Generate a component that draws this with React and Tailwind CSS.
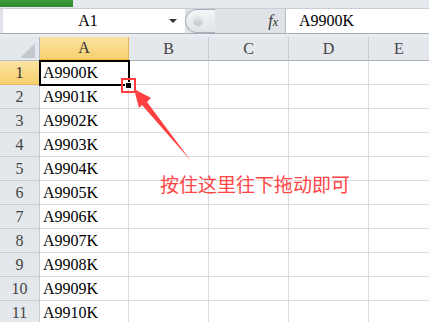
import React from "react";

const serif = { fontFamily: '"Liberation Serif", "Times New Roman", serif' };

const rows = Array.from({ length: 11 }, (_, i) => `A99${String(i).padStart(2, "0")}K`);

const HeaderCell = ({ w, label, active }) => (
  <div
    className={`${w} h-full shrink-0 flex items-center justify-center border-r text-[16px] ${
      active
        ? "bg-gradient-to-b from-[#fbe3a0] to-[#f7d06e] border-[#e3b45a] border-b-2 border-b-[#f0b54a] text-[#333]"
        : "bg-[#e4e7ec] border-[#c7ccd3] border-b border-b-[#a9b1bb] text-[#444]"
    }`}
  >
    {label}
  </div>
);

const App = () => {
  return (
    <div className="w-[429px] h-[322px] overflow-hidden bg-white" style={serif}>
      {/* top strip */}
      <div className="h-[8px] bg-[#e6e9ed] flex">
        <div className="w-[73px] h-[7px] bg-gradient-to-b from-[#3f9a3c] to-[#2f8a2e]" />
      </div>

      {/* formula bar */}
      <div className="h-[25px] flex bg-[#dfe3e8] border-t border-[#c9ced6]">
        <div className="w-[3px] bg-[#dfe3e8]" />
        <div className="w-[182px] bg-white flex items-center">
          <span className="flex-1 text-center text-[16px] text-black pl-[4px]">A1</span>
          <span className="w-0 h-0 border-l-[4px] border-r-[4px] border-t-[4px] border-l-transparent border-r-transparent border-t-[#333] mr-[8px]" />
        </div>
        <div className="w-[30px] flex items-center">
          <div className="w-[30px] h-[24px] rounded-l-full border border-r-0 border-[#a9b0ba] bg-gradient-to-b from-[#f4f5f7] to-[#dfe3e8] flex items-center pl-[7px]">
            <div className="w-[10px] h-[10px] rounded-full bg-gradient-to-b from-[#e8e9eb] to-[#c3c6ca]" />
          </div>
        </div>
        <div className="w-[70px] flex items-center justify-end pr-[7px]">
          <span className="italic text-[16px] text-[#333]">
            f<span className="text-[12px]">x</span>
          </span>
        </div>
        <div className="flex-1 bg-white border-l border-[#b8bec6] flex items-center pl-[13px] text-[16px] text-black">
          A9900K
        </div>
      </div>

      <div className="h-[1px] bg-[#a7acb3]" />
      <div className="h-[3px] bg-[#e9ecf0]" />

      {/* column headers */}
      <div className="h-[24px] flex">
        <div className="w-[40px] h-full shrink-0 bg-[#e4e7ec] border-r border-b border-[#b5bcc6] flex items-end justify-end pr-[4px] pb-[2px]">
          <svg width="15" height="15" viewBox="0 0 15 15">
            <polygon points="15,0 15,15 0,15" fill="#c5c9ce" />
          </svg>
        </div>
        <HeaderCell w="w-[89px]" label="A" active />
        <HeaderCell w="w-[80px]" label="B" />
        <HeaderCell w="w-[80px]" label="C" />
        <HeaderCell w="w-[80px]" label="D" />
        <div className="flex-1 h-full bg-[#e4e7ec] border-b border-[#a9b1bb] flex items-center justify-center text-[16px] text-[#444]">E</div>
      </div>

      {/* rows */}
      <div className="relative">
        {rows.map((v, i) => (
          <div key={v} className="h-[24px] flex">
            <div
              className={`w-[40px] shrink-0 flex items-center justify-center border-r border-b text-[16px] ${
                i === 0
                  ? "bg-gradient-to-b from-[#fbe3a0] to-[#f7d06e] border-[#e3b45a] text-[#333]"
                  : "bg-[#e4e7ec] border-[#c7ccd3] text-[#444]"
              }`}
            >
              {i + 1}
            </div>
            <div className="w-[89px] shrink-0 border-r border-b border-[#dadcdd] flex items-center pl-[3px] text-[16px] text-black">
              {v}
            </div>
            <div className="w-[80px] shrink-0 border-r border-b border-[#dadcdd]" />
            <div className="w-[80px] shrink-0 border-r border-b border-[#dadcdd]" />
            <div className="w-[80px] shrink-0 border-r border-b border-[#dadcdd]" />
            <div className="flex-1 border-b border-[#dadcdd]" />
          </div>
        ))}

        {/* selection on A1 */}
        <div className="absolute left-[39px] top-[-1px] w-[91px] h-[26px] border-2 border-black pointer-events-none" />
        <div className="absolute left-[125px] top-[21px] w-[7px] h-[7px] bg-black border border-white" />
        {/* red highlight box */}
        <div className="absolute left-[121px] top-[17px] w-[15px] h-[15px] border-[2px] border-[#ff3b3b]" />

        {/* arrow */}
        <svg className="absolute left-0 top-0" width="429" height="261" viewBox="0 61 429 261">
          <polygon points="134,89 151,98 147,102 191,161 142,105 139,108" fill="#ff4040" />
        </svg>

        <div
          className="absolute left-[160px] top-[111px] text-[19px] leading-[24px] text-[#ff4545] whitespace-nowrap"
          style={{ fontFamily: '"Noto Sans CJK SC", "Noto Sans", sans-serif' }}
        >
          按住这里往下拖动即可
        </div>
      </div>
    </div>
  );
};

export default App;
